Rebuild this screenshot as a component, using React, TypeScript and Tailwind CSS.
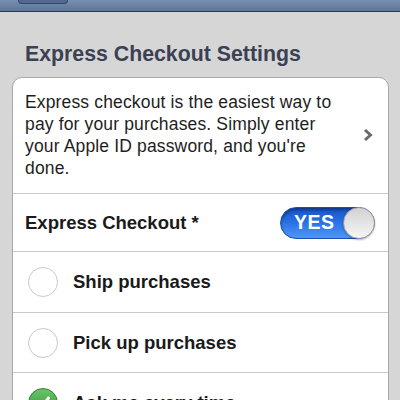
import React from "react";

const font = { fontFamily: '"Liberation Sans", Arial, sans-serif' };

function Radio() {
  return (
    <div className="w-[30px] h-[30px] rounded-full border-[1.5px] border-[#c9c9c9] bg-white shrink-0" />
  );
}

function Check() {
  return (
    <div className="w-[30px] h-[30px] rounded-full shrink-0 bg-gradient-to-b from-[#6cc46a] to-[#2a8e2c] border border-[#2f7d2f] flex items-center justify-center">
      <svg width="18" height="18" viewBox="0 0 18 18">
        <path d="M3.5 9.5 L7.5 13.5 L14.5 4" fill="none" stroke="white" strokeWidth="3" strokeLinecap="round" strokeLinejoin="round" />
      </svg>
    </div>
  );
}

function Toggle() {
  return (
    <div className="relative w-[95px] h-[32px] rounded-full bg-gradient-to-b from-[#1652c9] via-[#2a73e6] to-[#4f97f3] border border-[#1a4fb3] shadow-[inset_0_2px_3px_rgba(0,0,0,0.35)] flex items-center">
      <span className="pl-[13px] text-white font-bold text-[19.5px] leading-none tracking-[0.5px]">YES</span>
      <div className="absolute right-[-1px] top-[-1px] w-[32px] h-[32px] rounded-full bg-gradient-to-b from-[#d2d2d2] to-[#f6f6f6] border border-[#9c9c9c] shadow-[0_1px_2px_rgba(0,0,0,0.3)]" />
    </div>
  );
}

export default function App() {
  return (
    <div className="w-[400px] h-[400px] overflow-hidden bg-[#d6d6d6]" style={font}>
      <div className="h-[12px] bg-gradient-to-b from-[#7890b0] to-[#5d7599] border-b-[1.5px] border-[#2a3a55]">
        <div className="ml-[18px] w-[50px] h-[4px] rounded-b-[5px] border-x border-b border-[#34476a] bg-[#53698f]" />
      </div>
      <div className="pt-[30px] pl-[25px] leading-[24px] text-[21.3px] font-bold text-[#3a4153]">
        Express Checkout Settings
      </div>
      <div className="mt-[11px] ml-[12px] mr-[11px] bg-white border border-[#a8a8a8] rounded-t-[10px] overflow-hidden">
        <div className="flex items-center pt-[13px] pb-[14px] pl-[12px] pr-[15px] border-b border-[#c8c8c8]">
          <p className="flex-1 text-[17.5px] leading-[22px] text-[#1e1e1e] tracking-[0.15px]">
            Express checkout is the easiest way to<br />
            pay for your purchases. Simply enter<br />
            your Apple ID password, and you're<br />
            done.
          </p>
          <svg width="10" height="14" viewBox="0 0 10 14" className="shrink-0 ml-[4px]">
            <path d="M2 2 L7.5 7 L2 12" fill="none" stroke="#6a6a6a" strokeWidth="3" />
          </svg>
        </div>
        <div className="h-[58px] flex items-center justify-between pl-[12px] pr-[13px] border-b border-[#c8c8c8]">
          <span className="text-[18.5px] font-bold text-[#1a1a1a]">Express Checkout *</span>
          <Toggle />
        </div>
        <div className="h-[61px] flex items-center gap-[15px] pl-[15px] border-b border-[#c8c8c8]">
          <Radio />
          <span className="text-[18.5px] font-bold text-[#1a1a1a]">Ship purchases</span>
        </div>
        <div className="h-[60px] flex items-center gap-[15px] pl-[15px] border-b border-[#c8c8c8]">
          <Radio />
          <span className="text-[18.5px] font-bold text-[#1a1a1a]">Pick up purchases</span>
        </div>
        <div className="h-[60px] flex items-center gap-[15px] pl-[15px]">
          <Check />
          <span className="text-[18.5px] font-bold text-[#1a1a1a]">Ask me every time</span>
        </div>
      </div>
    </div>
  );
}
